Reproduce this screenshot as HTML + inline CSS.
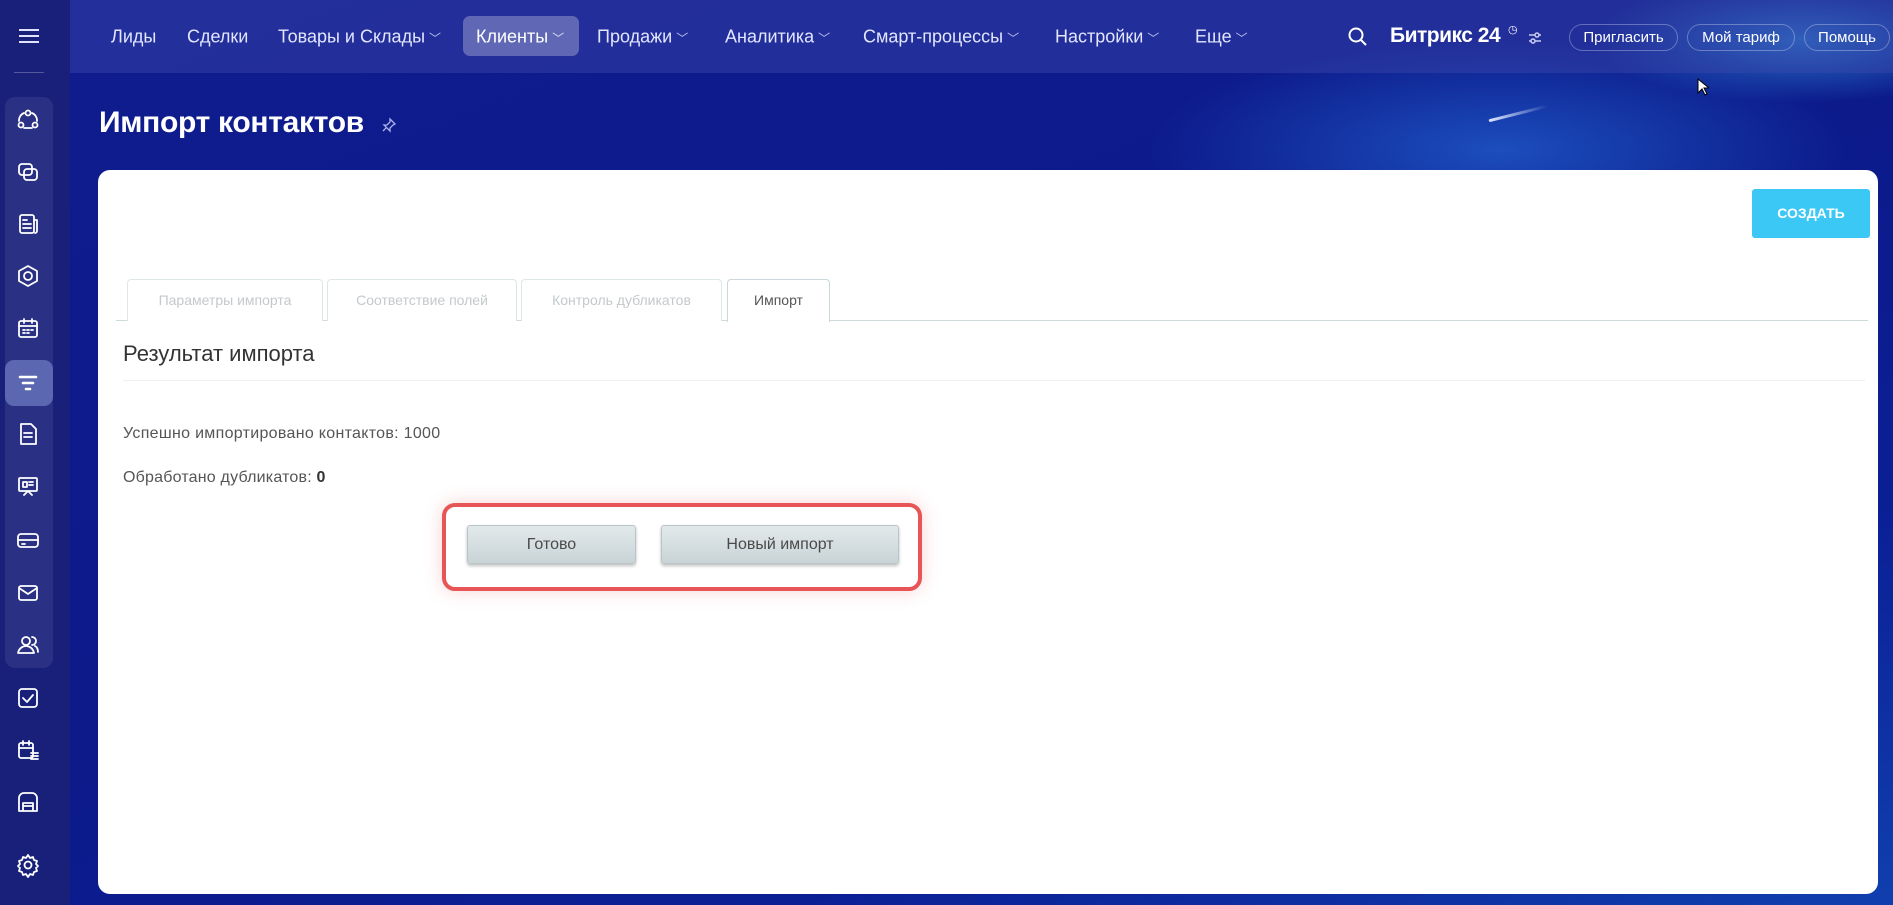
<!DOCTYPE html>
<html><head><meta charset="utf-8">
<style>
*{box-sizing:border-box;margin:0;padding:0}
body{width:1893px;height:905px;overflow:hidden;font-family:"Liberation Sans",sans-serif;position:relative;
background:
radial-gradient(ellipse 500px 160px at 1500px 150px,rgba(40,120,230,.55),transparent 70%),
radial-gradient(ellipse 300px 90px at 1800px 40px,rgba(60,170,240,.6),transparent 70%),
linear-gradient(160deg,#101c8e 0%,#0c1a8a 50%,#0b1f95 75%,#103fae 100%);}
.top{position:absolute;left:70px;top:0;width:1823px;height:73px;background:rgba(60,70,170,.45)}
.side{position:absolute;left:0;top:0;width:70px;height:905px;background:#18207a}
.grp{position:absolute;left:5px;top:97px;width:48px;height:571px;background:rgba(255,255,255,.08);border-radius:10px}
.ic{position:absolute;left:14px;width:28px;height:28px}
.ic svg{width:28px;height:28px;fill:none;stroke:#fff;stroke-width:1.8;stroke-linecap:round;stroke-linejoin:round}
.act{position:absolute;left:5px;top:360px;width:48px;height:46px;background:#5b67b0;border-radius:9px}
.nav{position:absolute;top:37px;transform:translateY(-50%);color:#e2e6ff;font-size:18px;white-space:nowrap}
.nav i{font-style:normal;font-size:12px;margin-left:4px;opacity:.8}
.kl{position:absolute;left:463px;top:16px;width:116px;height:40px;background:rgba(255,255,255,.28);border-radius:7px}
.pill{position:absolute;top:24px;height:27px;border:1px solid rgba(255,255,255,.3);border-radius:14px;color:#fff;font-size:15px;text-align:center;line-height:25px}
.card{position:absolute;left:98px;top:170px;width:1780px;height:724px;background:#fff;border-radius:12px}
.tab{position:absolute;top:279px;height:42px;border:1px solid #dfe6e8;border-bottom:none;border-radius:4px 4px 0 0;color:#c4c9cb;font-size:14px;text-align:center;line-height:40px;background:#fff}
.btn{position:absolute;height:39px;border:1px solid #b9c4c7;border-radius:3px;background:linear-gradient(#e2e9ea,#c9d4d7);box-shadow:0 2px 3px rgba(0,0,0,.25);color:#4a4a4a;font-size:16px;text-align:center;line-height:37px}
</style></head><body>
<div class="top"></div>
<div class="side">
 <div style="position:absolute;left:19px;top:29px;width:20px;height:2px;background:#dfe3ff;box-shadow:0 6px 0 #dfe3ff,0 12px 0 #dfe3ff"></div>
 <div style="position:absolute;left:14px;top:72px;width:30px;height:1px;background:rgba(255,255,255,.25)"></div>
 <div class="grp"></div>
 <div class="act"></div>
 <div class="ic" style="top:106px"><svg viewBox="0 0 28 28"><circle cx="14" cy="7" r="2.5"/><circle cx="7" cy="19" r="2.5"/><circle cx="21" cy="19" r="2.5"/><path d="M10 7a8 8 0 0 0-5 8M18 7a8 8 0 0 1 5 8M10 22h8"/></svg></div>
 <div class="ic" style="top:158px"><svg viewBox="0 0 28 28"><rect x="5" y="6" width="13" height="11" rx="3"/><rect x="10" y="11" width="13" height="11" rx="3"/></svg></div>
 <div class="ic" style="top:210px"><svg viewBox="0 0 28 28"><rect x="6" y="5" width="14" height="18" rx="2"/><path d="M20 10h3v11a2 2 0 0 1-2 2M9 10h4M9 14h8M9 18h8"/></svg></div>
 <div class="ic" style="top:262px"><svg viewBox="0 0 28 28"><path d="M14 4l9 5v10l-9 5-9-5V9z"/><circle cx="14" cy="14" r="4"/></svg></div>
 <div class="ic" style="top:314px"><svg viewBox="0 0 28 28"><rect x="5" y="7" width="18" height="16" rx="2"/><path d="M10 5v4M18 5v4M5 12h18M9 16h2M13 16h2M17 16h2M9 19h2M13 19h2"/></svg></div>
 <div class="ic" style="top:369px"><svg viewBox="0 0 28 28" style="stroke-width:2.6"><path d="M6 8h16M9 14h10M12 20h4"/></svg></div>
 <div class="ic" style="top:420px"><svg viewBox="0 0 28 28"><path d="M7 4h10l5 5v15H7z"/><path d="M10 13h8M10 17h8"/></svg></div>
 <div class="ic" style="top:473px"><svg viewBox="0 0 28 28"><rect x="5" y="5" width="18" height="13" rx="1"/><path d="M9 9h4v5H9zM15 9h4M15 12h4M10 22l4-4 4 4"/></svg></div>
 <div class="ic" style="top:526px"><svg viewBox="0 0 28 28"><rect x="4" y="8" width="20" height="13" rx="3"/><path d="M4 14h20M8 18h3"/></svg></div>
 <div class="ic" style="top:579px"><svg viewBox="0 0 28 28"><rect x="5" y="7" width="18" height="14" rx="2"/><path d="M5 9l9 6 9-6"/></svg></div>
 <div class="ic" style="top:631px"><svg viewBox="0 0 28 28"><circle cx="12" cy="10" r="4"/><path d="M4 22c1-5 5-7 8-7s7 2 8 7zM18 6a4 4 0 0 1 0 8M21 15c2 1 3 3 3 6"/></svg></div>
 <div class="ic" style="top:684px"><svg viewBox="0 0 28 28"><rect x="5" y="5" width="18" height="18" rx="3"/><path d="M9 14l4 4 6-7"/></svg></div>
 <div class="ic" style="top:736px"><svg viewBox="0 0 28 28"><rect x="5" y="7" width="14" height="15" rx="2"/><path d="M9 5v4M15 5v4M5 12h14M17 17h7M17 20h7M17 23h7"/></svg></div>
 <div class="ic" style="top:788px"><svg viewBox="0 0 28 28"><path d="M5 23V10a5 5 0 0 1 5-5h8a5 5 0 0 1 5 5v13M5 23h18M9 23v-8h10v8M9 18h10"/></svg></div>
 <div class="ic" style="top:851px"><svg viewBox="0 0 28 28"><circle cx="14" cy="14" r="3.5"/><path d="M14 4l2 3 3-1 1 3 3 1-1 3 2 2-2 2 1 3-3 1-1 3-3-1-2 3-2-3-3 1-1-3-3-1 1-3-2-2 2-2-1-3 3-1 1-3 3 1z"/></svg></div>
</div>
<div class="kl"></div>
<div class="nav" style="left:111px">Лиды</div>
<div class="nav" style="left:187px">Сделки</div>
<div class="nav" style="left:278px">Товары и Склады<i>﹀</i></div>
<div class="nav" style="left:476px;color:#fff">Клиенты<i>﹀</i></div>
<div class="nav" style="left:597px">Продажи<i>﹀</i></div>
<div class="nav" style="left:725px">Аналитика<i>﹀</i></div>
<div class="nav" style="left:863px">Смарт-процессы<i>﹀</i></div>
<div class="nav" style="left:1055px">Настройки<i>﹀</i></div>
<div class="nav" style="left:1195px">Еще<i>﹀</i></div>
<svg style="position:absolute;left:1347px;top:26px" width="22" height="22" viewBox="0 0 22 22" fill="none" stroke="#fff" stroke-width="2"><circle cx="9" cy="9" r="6.5"/><path d="M14 14l5 5"/></svg>
<div style="position:absolute;left:1390px;top:24px;color:#fff;font-size:21px;font-weight:bold;letter-spacing:-.5px">Битрикс 24</div>
<div style="position:absolute;left:1508px;top:23px;color:#fff;font-size:11px">◷</div>
<svg style="position:absolute;left:1527px;top:30px" width="16" height="16" viewBox="0 0 16 16" fill="none" stroke="#c8cdf0" stroke-width="1.5"><path d="M2 5h12M2 11h12"/><circle cx="10" cy="5" r="2" fill="#2a309a"/><circle cx="6" cy="11" r="2" fill="#2a309a"/></svg>
<div class="pill" style="left:1569px;width:109px">Пригласить</div>
<div class="pill" style="left:1687px;width:108px">Мой тариф</div>
<div class="pill" style="left:1804px;width:86px">Помощь</div>
<div style="position:absolute;left:1488px;top:112px;width:60px;height:3px;background:linear-gradient(90deg,#dfe6ff,rgba(80,120,255,0));transform:rotate(-14deg);border-radius:2px"></div>
<div style="position:absolute;left:99px;top:106px;color:#fff;font-size:30px;font-weight:bold;letter-spacing:-.3px">Импорт контактов</div>
<svg style="position:absolute;left:381px;top:117px" width="16" height="16" viewBox="0 0 16 16" fill="none" stroke="#aab3e8" stroke-width="1.3"><path d="M9 2l5 5-2 1-3 3 0 3-6-6 3 0 3-3zM5 11l-3 3"/></svg>
<div class="card"></div>
<div style="position:absolute;left:1752px;top:189px;width:118px;height:49px;background:#3bc8f5;border-radius:3px;color:#fff;font-size:14px;font-weight:bold;text-align:center;line-height:49px">СОЗДАТЬ</div>
<div style="position:absolute;left:116px;top:320px;width:1752px;height:1px;background:#cfdadd"></div>
<div class="tab" style="left:127px;width:196px">Параметры импорта</div>
<div class="tab" style="left:327px;width:190px">Соответствие полей</div>
<div class="tab" style="left:521px;width:201px">Контроль дубликатов</div>
<div class="tab" style="left:727px;width:103px;height:43px;color:#555;border-color:#cbd7db">Импорт</div>
<div style="position:absolute;left:123px;top:341px;color:#333;font-size:22px">Результат импорта</div>
<div style="position:absolute;left:123px;top:380px;width:1742px;height:1px;background:#edf0f1"></div>
<div style="position:absolute;left:123px;top:425px;color:#555;font-size:16px;letter-spacing:.3px">Успешно импортировано контактов: 1000</div>
<div style="position:absolute;left:123px;top:469px;color:#555;font-size:16px;letter-spacing:.2px">Обработано дубликатов: <b style="color:#333">0</b></div>
<div style="position:absolute;left:442px;top:503px;width:480px;height:88px;border:4px solid #e75556;border-radius:13px;box-shadow:0 0 18px rgba(231,85,86,.25)"></div>
<div class="btn" style="left:467px;width:169px;top:525px">Готово</div>
<div class="btn" style="left:661px;width:238px;top:525px">Новый импорт</div>
<svg style="position:absolute;left:1697px;top:78px" width="12" height="18" viewBox="0 0 12 18"><path d="M1 1v14l4-4 3 6 2-1-3-6h5z" fill="#fff" stroke="#000"/></svg>
</body></html>
